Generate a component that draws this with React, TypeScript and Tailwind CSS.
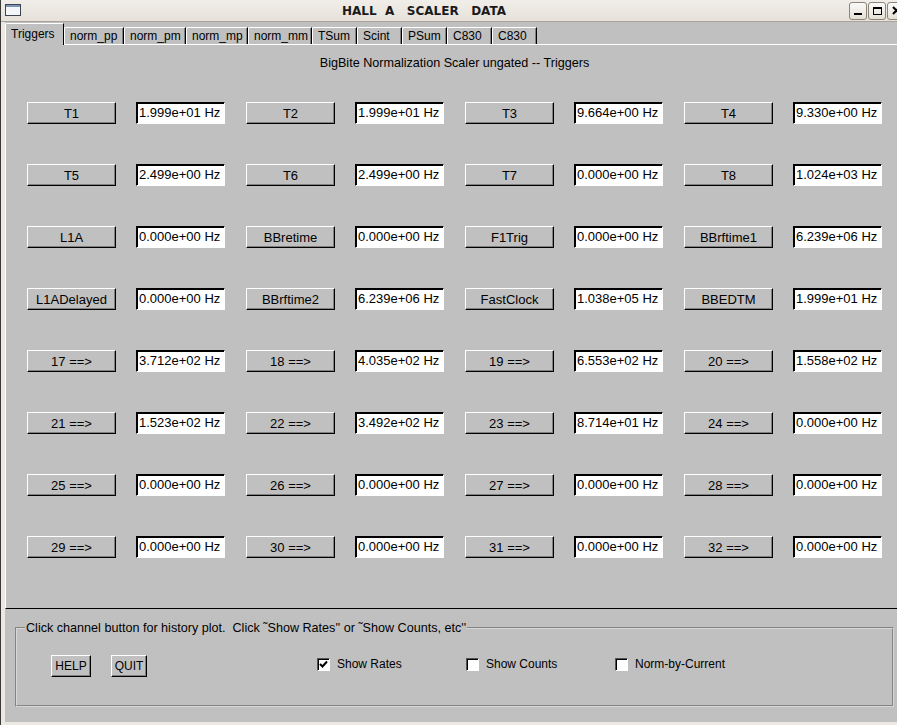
const rows: [string, string][][] = [
  [["T1", "1.999e+01"], ["T2", "1.999e+01"], ["T3", "9.664e+00"], ["T4", "9.330e+00"]],
  [["T5", "2.499e+00"], ["T6", "2.499e+00"], ["T7", "0.000e+00"], ["T8", "1.024e+03"]],
  [["L1A", "0.000e+00"], ["BBretime", "0.000e+00"], ["F1Trig", "0.000e+00"], ["BBrftime1", "6.239e+06"]],
  [["L1ADelayed", "0.000e+00"], ["BBrftime2", "6.239e+06"], ["FastClock", "1.038e+05"], ["BBEDTM", "1.999e+01"]],
  [["17 ==>", "3.712e+02"], ["18 ==>", "4.035e+02"], ["19 ==>", "6.553e+02"], ["20 ==>", "1.558e+02"]],
  [["21 ==>", "1.523e+02"], ["22 ==>", "3.492e+02"], ["23 ==>", "8.714e+01"], ["24 ==>", "0.000e+00"]],
  [["25 ==>", "0.000e+00"], ["26 ==>", "0.000e+00"], ["27 ==>", "0.000e+00"], ["28 ==>", "0.000e+00"]],
  [["29 ==>", "0.000e+00"], ["30 ==>", "0.000e+00"], ["31 ==>", "0.000e+00"], ["32 ==>", "0.000e+00"]],
]

const tabs: [string, string][] = [
  ["norm_pp", "w-[60px]"],
  ["norm_pm", "w-[62px]"],
  ["norm_mp", "w-[62px]"],
  ["norm_mm", "w-[64px]"],
  ["TSum", "w-[45px]"],
  ["Scint", "w-[45px]"],
  ["PSum", "w-[45px]"],
  ["C830", "w-[45px]"],
  ["C830", "w-[45px]"],
]

const Check = ({ label, checked }: { label: string; checked?: boolean }) => (
  <div className="w-[149px] flex items-center gap-[7px]">
    <div className="w-[13px] h-[13px] bg-white border border-t-[#555] border-l-[#555] border-b-white border-r-white shadow-[inset_1px_1px_0_#000] flex items-center justify-center">
      {checked && (
        <svg width="9" height="9" viewBox="0 0 9 9">
          <path d="M1 4 L3.5 6.5 L8 1.5" stroke="#000" strokeWidth="2" fill="none" />
        </svg>
      )}
    </div>
    <span className="text-[12px] leading-[14px] text-black">{label}</span>
  </div>
)

const TkButton = ({ label, className }: { label: string; className: string }) => (
  <div
    className={`${className} bg-[#c0c0c0] border border-t-white border-l-white border-b-black border-r-black shadow-[inset_-1px_-1px_0_#808080] flex items-center justify-center text-black`}
  >
    {label}
  </div>
)

export default function App() {
  return (
    <div className="w-[897px] h-[725px] overflow-hidden bg-[#ece9e2] border-l border-l-[#3a3a3a] flex flex-col font-['Liberation_Sans',Arial,sans-serif] text-black">
      {/* title bar */}
      <div className="h-[22px] flex items-center shrink-0 bg-gradient-to-b from-[#f1eee9] to-[#e6e2da] border-b border-b-[#a8a49b]">
        <svg width="16" height="12" viewBox="0 0 16 12" className="ml-[4px] mt-[-1px]">
          <rect x="0.5" y="0.5" width="15" height="11" fill="#f4f6fa" stroke="#3b4654" />
          <rect x="1" y="1" width="14" height="2" fill="#7d93b3" />
        </svg>
        <span className="ml-[321px] whitespace-pre font-['DejaVu_Sans',sans-serif] font-bold text-[12px] leading-[14px] text-[#1a1a1a]">
          HALL  A   SCALER   DATA
        </span>
        <div className="ml-auto mr-[-8px] flex gap-[1px]">
          <div className="w-[18px] h-[18px] rounded-[3px] border border-[#8b8577] bg-gradient-to-b from-[#fbfaf8] to-[#e4e0d7] flex items-end justify-center pb-[4px]">
            <div className="w-[8px] h-[2px] bg-black" />
          </div>
          <div className="w-[18px] h-[18px] rounded-[3px] border border-[#8b8577] bg-gradient-to-b from-[#fbfaf8] to-[#e4e0d7] flex items-center justify-center">
            <div className="w-[9px] h-[8px] border border-black border-t-2" />
          </div>
          <div className="w-[18px] h-[18px] rounded-[3px] border border-[#8b8577] bg-gradient-to-b from-[#fbfaf8] to-[#e4e0d7] flex items-center justify-center">
            <svg width="9" height="9" viewBox="0 0 9 9">
              <path d="M1 1 L8 8 M8 1 L1 8" stroke="#000" strokeWidth="2" />
            </svg>
          </div>
        </div>
      </div>

      {/* body */}
      <div className="flex-1 ml-[4px] bg-[#c0c0c0] flex flex-col">
        {/* tab row */}
        <div className="h-[22px] flex items-end shrink-0 text-[12px] leading-[14px]">
          <div className="relative z-10 w-[59px] h-[22px] -mb-[1px] bg-[#c0c0c0] border-l border-t border-l-white border-t-white border-r border-r-black rounded-tl-[2px] pl-[5px] pt-[3px]">
            Triggers
          </div>
          {tabs.map(([t, w], i) => (
            <div
              key={i}
              className={`${w} h-[17px] bg-[#c0c0c0] border-l border-t border-l-white border-t-white border-r border-r-black shadow-[inset_-1px_0_0_#808080] rounded-tl-[2px] pl-[5px] pt-[1px]`}
            >
              {t}
            </div>
          ))}
        </div>

        {/* notebook page */}
        <div className="h-[565px] shrink-0 border-t border-t-white border-l border-l-white border-b border-b-black flex flex-col">
          <div className="pt-[11px] text-center text-[12.6px] leading-[14px] pl-[6px]">
            BigBite Normalization Scaler ungated -- Triggers
          </div>
          <div className="mt-[32px] flex flex-col gap-[40px] pl-[21px]">
            {rows.map((r, i) => (
              <div key={i} className="flex h-[22px]">
                {r.map(([name, val], j) => (
                  <div key={j} className="flex shrink-0 mr-[21px] gap-[20px]">
                    <TkButton label={name} className="w-[89px] h-[22px] text-[13px] leading-[15px]" />
                    <div className="w-[89px] h-[22px] bg-white border border-t-black border-l-black border-b-white border-r-white shadow-[inset_1px_1px_0_#000] pl-[2px] text-[13px] leading-[20px] whitespace-pre">
                      {val} Hz
                    </div>
                  </div>
                ))}
              </div>
            ))}
          </div>
        </div>

        {/* bottom controls */}
        <div className="flex-1 pl-[10px] pr-[3px] pt-[12px]">
          <fieldset className="h-[86px] [border-style:groove] border-2 border-[#d8d8d8] px-0">
            <legend className="ml-[8px] px-[1px] text-[12.6px] leading-[14px] whitespace-pre">
              Click channel button for history plot.  Click ˜Show Rates'' or ˜Show Counts, etc''
            </legend>
            <div className="flex items-center mt-[20px] pl-[34px]">
              <TkButton label="HELP" className="w-[40px] h-[22px] text-[12px] leading-[14px]" />
              <TkButton label="QUIT" className="w-[36px] h-[22px] text-[12px] leading-[14px] ml-[20px]" />
              <div className="ml-[170px] flex -mt-[4px]">
                <Check label="Show Rates" checked />
                <Check label="Show Counts" />
                <Check label="Norm-by-Current" />
              </div>
            </div>
          </fieldset>
        </div>
      </div>
      <div className="h-[3px] shrink-0" />
    </div>
  )
}
